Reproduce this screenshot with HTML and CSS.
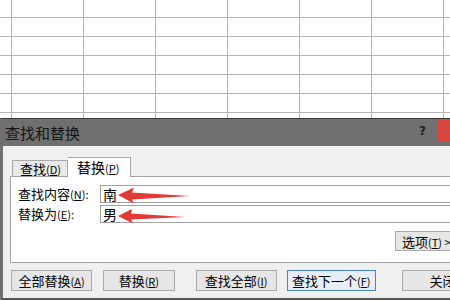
FILE: index.html
```html
<!DOCTYPE html>
<html lang="zh-CN">
<head>
    <meta charset="UTF-8">
    <meta name="viewport" content="width=device-width, initial-scale=1.0">
    <title>查找和替换</title>
    <link rel="stylesheet" href="styles.css">
</head>
<body>
    <!-- worksheet behind the dialog -->
    <div class="sheet"></div>

    <div class="dialog">
        <div class="titlebar">
            <span class="title">查找和替换</span>
            <span class="help">?</span>
            <span class="close"></span>
        </div>

        <div class="dialog-body">
            <div class="tabs">
                <div class="tab">查找<span class="key">(<u>D</u>)</span></div>
                <div class="tab active">替换<span class="key">(<u>P</u>)</span></div>
            </div>

            <div class="panel">
                <div class="row">
                    <label>查找内容<span class="key">(<u>N</u>):</span></label>
                    <div class="field">南</div>
                </div>
                <div class="row">
                    <label>替换为<span class="key">(<u>E</u>):</span></label>
                    <div class="field">男</div>
                </div>
                <div class="options-row">
                    <button class="btn btn-options">选项<span class="key">(<u>T</u>) &gt;&gt;</span></button>
                </div>
            </div>

            <div class="actions">
                <button class="btn btn-all">全部替换<span class="key">(<u>A</u>)</span></button>
                <button class="btn btn-replace">替换<span class="key">(<u>R</u>)</span></button>
                <button class="btn btn-findall">查找全部<span class="key">(<u>I</u>)</span></button>
                <button class="btn btn-next">查找下一个<span class="key">(<u>F</u>)</span></button>
                <button class="btn btn-close">关闭</button>
            </div>
        </div>

        <!-- red annotation arrows -->
        <svg class="arrows" width="90" height="44" viewBox="0 0 90 44">
            <path d="M8 12 L24 4.5 L22 9.5 L80 13 L22 16.5 L24 20.5 Z" fill="#e23b37"/>
            <path d="M8 33 L22 26 L21 30.5 L75 34 L21 36.5 L23 40.5 Z" fill="#e23b37"/>
        </svg>
    </div>
</body>
</html>
```

FILE: styles.css
```css
* {
    box-sizing: border-box;
}
html, body {
    margin: 0;
    padding: 0;
    width: 450px;
    height: 300px;
    overflow: hidden;
    background: #fff;
    font-family: "Noto Sans CJK SC", "Noto Sans", sans-serif;
    font-size: 13px;
    color: #000;
}
.sheet {
    height: 118px;
    background-color: #fff;
    background-image:
        linear-gradient(to right, #b6b6b6 1px, transparent 1px),
        linear-gradient(to bottom, #b6b6b6 1px, transparent 1px);
    background-size: 72px 100%, 100% 19px;
    background-position: 11px 0, 0 17px;
}
.dialog {
    position: relative;
    width: 486px;
    background: #f0f0f0;
    border-top: 1px solid #3a3a3a;
    border-left: 3px solid #707070;
    border-right: 3px solid #707070;
    border-bottom: 2px solid #555;
}
.titlebar {
    height: 27px;
    background: #717071;
    display: flex;
    align-items: center;
    padding-left: 2px;
}
.title {
    font-size: 15px;
    line-height: 27px;
    color: #141414;
}
.help {
    margin-left: auto;
    margin-right: 12px;
    margin-top: -4px;
    font-family: "DejaVu Sans", sans-serif;
    font-weight: bold;
    font-size: 12px;
    color: #1c1c1c;
}
.close {
    width: 43px;
    height: 23px;
    align-self: flex-start;
    background: #d9463f;
    margin-right: 2px;
}
.key {
    font-size: 11px;
}
.dialog-body {
    padding: 11px 0 7px 7px;
}
.tabs {
    display: flex;
    align-items: flex-end;
    margin-left: 2px;
    height: 19px;
}
.tab {
    width: 56px;
    height: 16px;
    line-height: 15px;
    padding-left: 7px;
    white-space: nowrap;
    background: #e9e9e9;
    border: 1px solid #a9a9a9;
    border-bottom: none;
    font-size: 13px;
}
.tab.active {
    position: relative;
    z-index: 1;
    width: 63px;
    height: 20px;
    line-height: 18px;
    padding-left: 9px;
    border-left: none;
    margin-bottom: -1px;
    background: #fff;
    font-size: 14px;
}
.panel {
    background: #fff;
    border: 1px solid #a5a5a5;
    border-right: none;
    padding: 8px 8px 11px 7px;
    display: flex;
    flex-direction: column;
    gap: 2px;
}
.row {
    display: flex;
    height: 18px;
}
.row label {
    width: 82px;
    line-height: 18px;
    font-size: 13px;
    white-space: nowrap;
}
.field {
    flex: 1;
    border: 1px solid #a0a0a0;
    padding-left: 2px;
    font-size: 14px;
    line-height: 16px;
}
.options-row {
    display: flex;
    justify-content: flex-end;
    margin-top: 6px;
}
.btn {
    height: 21px;
    padding: 0;
    font-family: inherit;
    font-size: 13px;
    line-height: 19px;
    color: #000;
    white-space: nowrap;
    background: #e6e6e6;
    border: 1px solid #a9a9a9;
    border-radius: 0;
}
.btn-options {
    width: 80px;
    height: 20px;
    text-align: left;
    padding-left: 6px;
}
.actions {
    display: flex;
    margin-top: 7px;
}
.btn-all {
    width: 82px;
    margin-left: 1px;
}
.btn-replace {
    width: 72px;
    margin-left: 11px;
}
.btn-findall {
    width: 82px;
    margin-left: 21px;
}
.btn-next {
    width: 90px;
    margin-left: 10px;
    background: #e7eef5;
    border-color: #4784bb;
}
.btn-close {
    width: 82px;
    margin-left: 26px;
}
.arrows {
    position: absolute;
    left: 107px;
    top: 64px;
}
```
